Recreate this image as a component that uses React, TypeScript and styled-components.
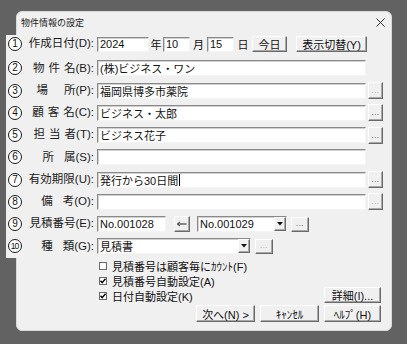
import React from 'react';
import styled, { createGlobalStyle, css } from 'styled-components';

const Global = createGlobalStyle`
  html, body { margin: 0; padding: 0; background: #626262; }
  body {
    width: 407px; height: 344px; overflow: hidden;
    font-family: "Liberation Sans", "Noto Sans CJK JP", sans-serif;
    color: #111;
  }
`;

const Screen = styled.div`
  width: 407px;
  height: 344px;
  box-sizing: border-box;
  padding: 11px 0 0 16px;
`;

const Dialog = styled.div`
  width: 376px;
  height: 320px;
  box-sizing: border-box;
  background: #f0f0f0;
  border: 1px solid #d8d8d8;
  border-radius: 6px;
  display: flex;
  flex-direction: column;
`;

const TitleBar = styled.div`
  height: 20px;
  display: flex;
  align-items: center;
  justify-content: space-between;
  padding: 0 6px 0 4px;
  font-family: "Noto Sans CJK JP", sans-serif;
  font-size: 9px;
  color: #222;
`;

const Form = styled.div`
  margin: 3px 0 0 -11px;
  padding-bottom: 3px;
  background: #f0f0f0;
  display: flex;
  flex-direction: column;
  gap: 4.25px;
`;

const Row = styled.div<{ $first?: boolean }>`
  height: 18px;
  display: flex;
  align-items: center;
  ${(p) => p.$first && css`margin-bottom: 2px;`}
`;

const BadgeCell = styled.div`
  width: 18px;
  display: flex;
  justify-content: center;
`;

const Badge = styled.div`
  width: 14px;
  height: 14px;
  box-sizing: border-box;
  border-radius: 50%;
  border: 1.3px solid #1a1a1a;
  background: #fff;
  display: flex;
  align-items: center;
  justify-content: center;
  font-family: "Liberation Sans", sans-serif;
  font-size: 10px;
  line-height: 1;
  color: #111;
`;

const SmallNum = styled.span`
  font-size: 8.5px;
  letter-spacing: -0.8px;
  margin-left: -0.8px;
`;

const Label = styled.div`
  width: 70px;
  margin-right: 3px;
  text-align: right;
  white-space: nowrap;
  font-size: 11.5px;
  line-height: 1;
  color: #1a1a1a;
`;

const Sp = styled.span<{ $ls: number }>`
  letter-spacing: ${(p) => p.$ls}px;
`;

const sunken = css`
  box-sizing: border-box;
  background: #fff;
  border: 1px solid;
  border-color: #8a8a8a #f4f4f4 #f4f4f4 #8a8a8a;
  box-shadow: inset 1px 1px 0 #d0d0d0;
`;

const Input = styled.div<{ $w: number; $h?: number }>`
  ${sunken};
  width: ${(p) => p.$w}px;
  height: ${(p) => p.$h ?? 16}px;
  padding: 0 2px;
  display: flex;
  align-items: center;
  font-size: 11px;
  white-space: nowrap;
  overflow: hidden;
`;

const Caret = styled.span`
  display: inline-block;
  width: 1px;
  height: 12px;
  background: #000;
  margin-left: 1px;
`;

const Unit = styled.span<{ $w: number }>`
  width: ${(p) => p.$w}px;
  text-align: center;
  font-size: 11px;
  font-family: "Noto Sans CJK JP", sans-serif;
`;

const raised = css`
  box-sizing: border-box;
  background: #f0f0f0;
  border: 1px solid;
  border-color: #ffffff #6a6a6a #6a6a6a #ffffff;
  box-shadow: inset -1px -1px 0 #a8a8a8;
`;

const Button = styled.div<{ $w: number; $h?: number; $ml?: number }>`
  ${raised};
  width: ${(p) => p.$w}px;
  height: ${(p) => p.$h ?? 17}px;
  margin-left: ${(p) => p.$ml ?? 0}px;
  display: flex;
  align-items: center;
  justify-content: center;
  font-size: 11px;
  white-space: nowrap;
  color: #111;
`;

const Dots = styled.div<{ $w?: number; $h?: number; $ml?: number; $off?: boolean }>`
  ${raised};
  width: ${(p) => p.$w ?? 15}px;
  height: ${(p) => p.$h ?? 17}px;
  margin-left: ${(p) => p.$ml ?? 2}px;
  display: flex;
  align-items: flex-end;
  justify-content: center;
  padding-bottom: 3px;
  font-size: 8px;
  line-height: 1;
  letter-spacing: 0.5px;
  color: ${(p) => (p.$off ? '#a0a0a0' : '#333')};
`;

const Combo = styled.div<{ $w: number; $ml?: number }>`
  ${sunken};
  width: ${(p) => p.$w}px;
  height: 16px;
  margin-left: ${(p) => p.$ml ?? 0}px;
  display: flex;
  align-items: stretch;
  font-size: 11px;
`;

const ComboText = styled.div`
  flex: 1;
  display: flex;
  align-items: center;
  padding-left: 2px;
  white-space: nowrap;
  overflow: hidden;
`;

const ComboArrow = styled.div`
  ${raised};
  width: 12px;
  display: flex;
  align-items: center;
  justify-content: center;
`;

const Checks = styled.div`
  display: flex;
  align-items: flex-end;
  padding: 0 10px 0 82px;
`;

const CheckList = styled.div`
  flex: 1;
  display: flex;
  flex-direction: column;
`;

const CheckRow = styled.div`
  height: 15px;
  display: flex;
  align-items: center;
  font-size: 11px;
  white-space: nowrap;
`;

const Box = styled.div`
  width: 8px;
  height: 8px;
  box-sizing: border-box;
  border: 1px solid #6a6a6a;
  background: #fff;
  margin-right: 5px;
  display: flex;
  align-items: center;
  justify-content: center;
`;

const Footer = styled.div`
  display: flex;
  justify-content: flex-end;
  gap: 5px;
  padding: 2px 10px 0 0;
`;

const Num = ({ n }: { n: number }) => (
  <BadgeCell>
    <Badge>{n === 10 ? <SmallNum>10</SmallNum> : n}</Badge>
  </BadgeCell>
);

const Arrow = () => (
  <svg width="6" height="4" viewBox="0 0 6 4">
    <path d="M0 0 H6 L3 3.5 Z" fill="#111" />
  </svg>
);

const Check = ({ on }: { on: boolean }) => (
  <Box>
    {on && (
      <svg width="6" height="6" viewBox="0 0 6 6">
        <path d="M0.5 2.8 L2.2 4.6 L5.5 0.8" stroke="#000" strokeWidth="1.4" fill="none" />
      </svg>
    )}
  </Box>
);

export default function App() {
  return (
    <>
      <Global />
      <Screen>
        <Dialog>
          <TitleBar>
            <span>物件情報の設定</span>
            <svg width="9" height="9" viewBox="0 0 9 9">
              <path d="M0.5 0.5 L8.5 8.5 M8.5 0.5 L0.5 8.5" stroke="#333" strokeWidth="1" />
            </svg>
          </TitleBar>
          <Form>
            <Row $first>
              <Num n={1} />
              <Label>作成日付(D):</Label>
              <Input $w={52} $h={15}>2024</Input>
              <Unit $w={14}>年</Unit>
              <Input $w={27} $h={15}>10</Input>
              <Unit $w={17}>月</Unit>
              <Input $w={27} $h={15}>15</Input>
              <Unit $w={18}>日</Unit>
              <Button $w={35} $h={16}>今日</Button>
              <Button $w={71} $h={16} $ml={9}>表示切替(Y)</Button>
            </Row>
            <Row>
              <Num n={2} />
              <Label><Sp $ls={4}>物件</Sp>名(B):</Label>
              <Input $w={269}>(株)ビジネス・ワン</Input>
            </Row>
            <Row>
              <Num n={3} />
              <Label><Sp $ls={16}>場</Sp>所(P):</Label>
              <Input $w={269}>福岡県博多市薬院</Input>
              <Dots $off>...</Dots>
            </Row>
            <Row>
              <Num n={4} />
              <Label><Sp $ls={4}>顧客</Sp>名(C):</Label>
              <Input $w={269}>ビジネス・太郎</Input>
              <Dots>...</Dots>
            </Row>
            <Row>
              <Num n={5} />
              <Label><Sp $ls={4}>担当</Sp>者(T):</Label>
              <Input $w={269}>ビジネス花子</Input>
              <Dots>...</Dots>
            </Row>
            <Row>
              <Num n={6} />
              <Label><Sp $ls={10}>所</Sp>属(S):</Label>
              <Input $w={269} />
            </Row>
            <Row>
              <Num n={7} />
              <Label>有効期限(U):</Label>
              <Input $w={269}>発行から30日間<Caret /></Input>
              <Dots>...</Dots>
            </Row>
            <Row>
              <Num n={8} />
              <Label><Sp $ls={10}>備</Sp>考(O):</Label>
              <Input $w={269} />
              <Dots $off>...</Dots>
            </Row>
            <Row>
              <Num n={9} />
              <Label>見積番号(E):</Label>
              <Input $w={69}>No.001028</Input>
              <Button $w={16} $h={16} $ml={8}>
                <svg width="10" height="6" viewBox="0 0 10 6">
                  <path d="M0.5 3 H9.5 M0.5 3 L3 0.8 M0.5 3 L3 5.2" stroke="#222" strokeWidth="1" fill="none" />
                </svg>
              </Button>
              <Combo $w={90} $ml={7}>
                <ComboText>No.001029</ComboText>
                <ComboArrow><Arrow /></ComboArrow>
              </Combo>
              <Dots $w={18} $h={15} $ml={4}>...</Dots>
            </Row>
            <Row>
              <Num n={10} />
              <Label><Sp $ls={10}>種</Sp>類(G):</Label>
              <Combo $w={154}>
                <ComboText>見積書</ComboText>
                <ComboArrow><Arrow /></ComboArrow>
              </Combo>
              <Dots $w={18} $h={15} $ml={4} $off>...</Dots>
            </Row>
          </Form>
          <Checks>
            <CheckList>
              <CheckRow><Check on={false} />見積番号は顧客毎にｶｳﾝﾄ(F)</CheckRow>
              <CheckRow><Check on />見積番号自動設定(A)</CheckRow>
              <CheckRow><Check on />日付自動設定(K)</CheckRow>
            </CheckList>
            <Button $w={57} $h={16}>詳細(I)...</Button>
          </Checks>
          <Footer>
            <Button $w={59} $h={17}>次へ(N) &gt;</Button>
            <Button $w={59} $h={17}>ｷｬﾝｾﾙ</Button>
            <Button $w={57} $h={17}>ﾍﾙﾌﾟ(H)</Button>
          </Footer>
        </Dialog>
      </Screen>
    </>
  );
}
